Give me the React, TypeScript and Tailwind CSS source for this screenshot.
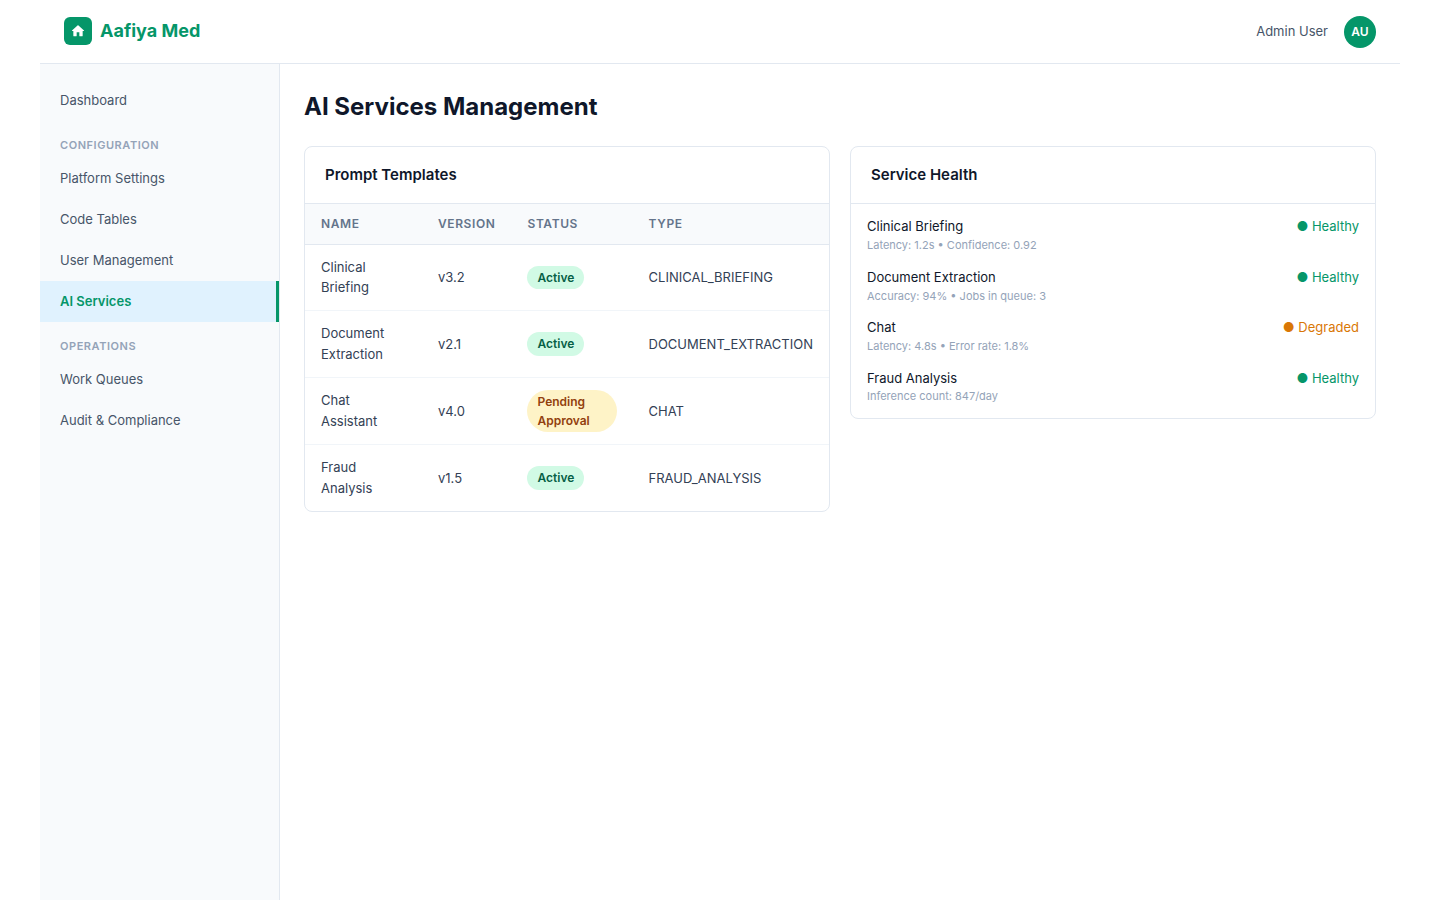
const font = "font-['Inter',sans-serif]";

function Nav({ label, active }: { label: string; active?: boolean }) {
  return (
    <a
      className={
        active
          ? "block border-r-[3px] border-[#059669] bg-[#e0f2fe] px-5 py-[10px] text-[13px] leading-[1.6] font-semibold text-[#059669]"
          : "block px-5 py-[10px] text-[13px] leading-[1.6] text-[#475569]"
      }
    >
      {label}
    </a>
  );
}

function Section({ label }: { label: string }) {
  return (
    <div className="mt-4 mb-1 px-5 text-[11px] leading-[1.6] font-semibold tracking-[0.05em] text-[#94a3b8] uppercase">
      {label}
    </div>
  );
}

function Badge({ label, pending }: { label: string; pending?: boolean }) {
  return (
    <span
      className={
        pending
          ? "inline-block rounded-full bg-[#fef3c7] px-[10px] py-0.5 text-xs leading-[1.6] font-semibold text-[#92400e]"
          : "inline-block rounded-full bg-[#d1fae5] px-[10px] py-0.5 text-xs leading-[1.6] font-semibold text-[#065f46]"
      }
    >
      {label}
    </span>
  );
}

const rows = [
  { name: "Clinical Briefing", version: "v3.2", status: "Active", type: "CLINICAL_BRIEFING" },
  { name: "Document Extraction", version: "v2.1", status: "Active", type: "DOCUMENT_EXTRACTION" },
  { name: "Chat Assistant", version: "v4.0", status: "Pending Approval", type: "CHAT" },
  { name: "Fraud Analysis", version: "v1.5", status: "Active", type: "FRAUD_ANALYSIS" },
];

const services = [
  { name: "Clinical Briefing", meta: "Latency: 1.2s • Confidence: 0.92", status: "Healthy" },
  { name: "Document Extraction", meta: "Accuracy: 94% • Jobs in queue: 3", status: "Healthy" },
  { name: "Chat", meta: "Latency: 4.8s • Error rate: 1.8%", status: "Degraded" },
  { name: "Fraud Analysis", meta: "Inference count: 847/day", status: "Healthy" },
];

export default function App() {
  return (
    <div className={`${font} mx-auto flex min-h-[900px] max-w-[1360px] flex-col bg-white leading-[1.6] text-[#0f172a] antialiased [text-rendering:optimizeLegibility]`}>
      <header className="flex h-16 items-center justify-between border-b border-[#e2e8f0] px-6">
        <div className="flex items-center gap-2">
          <div className="flex h-7 w-7 items-center justify-center rounded-md bg-[#059669]">
            <svg viewBox="0 0 24 24" className="h-4 w-4" fill="#ffffff">
              <path d="M10 19v-5h4v5c0 .55.45 1 1 1h3c.55 0 1-.45 1-1v-7h1.7c.46 0 .68-.57.33-.87L12.67 3.6c-.38-.34-.96-.34-1.34 0l-8.36 7.53c-.34.3-.13.87.33.87H5v7c0 .55.45 1 1 1h3c.55 0 1-.45 1-1z" />
            </svg>
          </div>
          <span className="text-lg leading-[1.6] font-bold text-[#059669]">Aafiya Med</span>
        </div>
        <div className="flex items-center gap-4">
          <span className="text-[13px] leading-[1.6] text-[#475569]">Admin User</span>
          <div className="flex h-8 w-8 items-center justify-center rounded-full bg-[#059669] text-xs font-semibold text-white">
            AU
          </div>
        </div>
      </header>
      <div className="flex flex-1">
        <aside className="w-60 shrink-0 border-r border-[#e2e8f0] bg-[#f8fafc] py-4">
          <Nav label="Dashboard" />
          <Section label="Configuration" />
          <Nav label="Platform Settings" />
          <Nav label="Code Tables" />
          <Nav label="User Management" />
          <Nav label="AI Services" active />
          <Section label="Operations" />
          <Nav label="Work Queues" />
          <Nav label="Audit & Compliance" />
        </aside>
        <main className="min-w-0 flex-1 p-6">
          <h1 className="mb-5 text-2xl leading-[1.6] font-bold text-[#0f172a]">AI Services Management</h1>
          <div className="grid grid-cols-2 items-start gap-5">
            <section className="overflow-hidden rounded-lg border border-[#e2e8f0] bg-white">
              <h2 className="border-b border-[#e2e8f0] px-5 py-4 text-[15px] leading-[1.6] font-semibold">Prompt Templates</h2>
              <table className="w-full border-collapse text-left text-[13px] leading-[1.6]">
                <thead>
                  <tr className="border-b border-[#e2e8f0] bg-[#f8fafc]">
                    {["Name", "Version", "Status", "Type"].map((h) => (
                      <th
                        key={h}
                        className="px-4 py-[10px] text-xs leading-[1.6] font-semibold tracking-[0.05em] text-[#64748b] uppercase"
                      >
                        {h}
                      </th>
                    ))}
                  </tr>
                </thead>
                <tbody>
                  {rows.map((r, i) => (
                    <tr key={r.name} className={i < rows.length - 1 ? "border-b border-[#f1f5f9]" : ""}>
                      <td className="px-4 py-3 text-[#334155]">{r.name}</td>
                      <td className="px-4 py-3 text-[#334155]">{r.version}</td>
                      <td className="px-4 py-3">
                        <Badge label={r.status} pending={r.status !== "Active"} />
                      </td>
                      <td className="px-4 py-3 text-[#334155]">{r.type}</td>
                    </tr>
                  ))}
                </tbody>
              </table>
            </section>
            <section className="overflow-hidden rounded-lg border border-[#e2e8f0] bg-white">
              <h2 className="border-b border-[#e2e8f0] px-5 py-4 text-[15px] leading-[1.6] font-semibold">Service Health</h2>
              <div className="flex flex-col gap-3 px-4 py-3">
                {services.map((s) => (
                  <div key={s.name} className="flex items-start justify-between">
                    <div>
                      <div className="text-[13px] leading-[1.6] text-[#0f172a]">{s.name}</div>
                      <div className="text-[11px] leading-[1.6] text-[#94a3b8]">{s.meta}</div>
                    </div>
                    <div
                      className={
                        s.status === "Healthy"
                          ? "text-[13px] leading-[1.6] text-[#059669]"
                          : "text-[13px] leading-[1.6] text-[#d97706]"
                      }
                    >
                      ● {s.status}
                    </div>
                  </div>
                ))}
              </div>
            </section>
          </div>
        </main>
      </div>
    </div>
  );
}
